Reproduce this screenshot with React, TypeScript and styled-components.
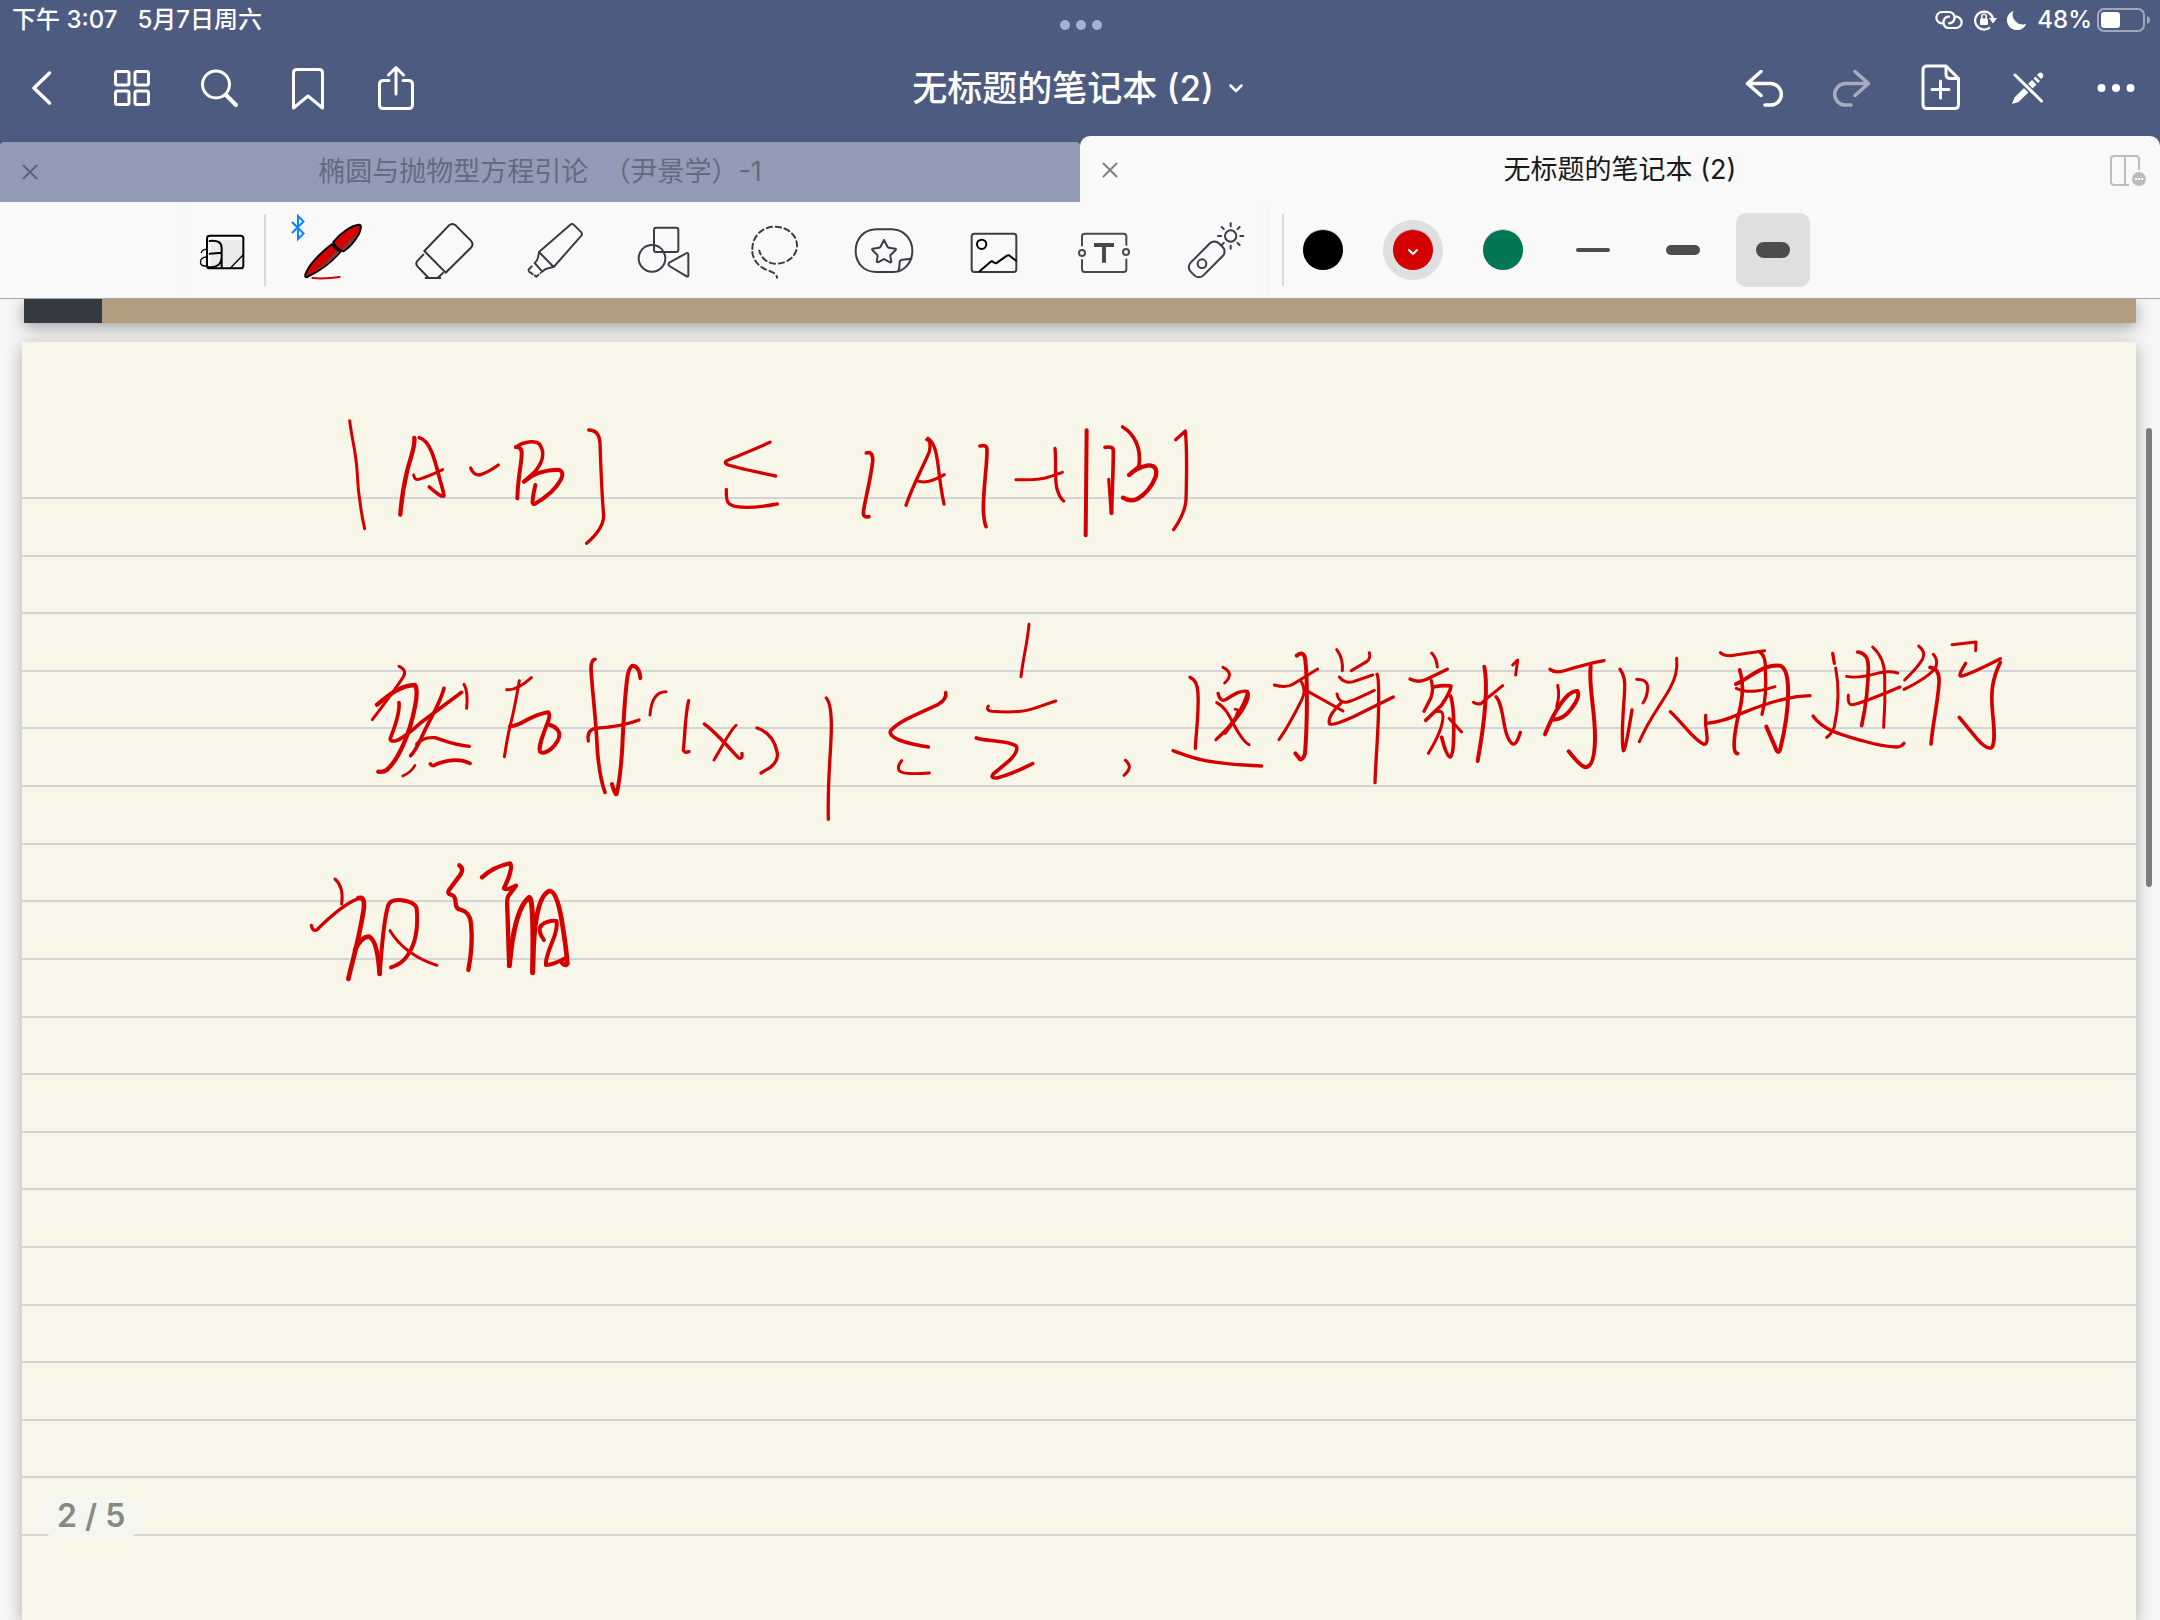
import React from 'react';
import styled, { createGlobalStyle } from 'styled-components';

const GlobalStyle = createGlobalStyle`
  * { box-sizing: border-box; }
  body {
    margin: 0;
    font-family: Inter, "Noto Sans CJK SC", sans-serif;
    background: #f6f6f6;
  }
  button {
    margin: 0;
    padding: 0;
    border: 0;
    background: none;
    color: inherit;
    font: inherit;
    cursor: pointer;
  }
  svg { display: block; }
`;

const Screen = styled.div`
  display: flex;
  flex-direction: column;
  height: 100vh;
  overflow: hidden;
`;

const Header = styled.header`
  flex: none;
  background: #4e5b80;
  color: #fff;
`;

const StatusBar = styled.div`
  display: grid;
  grid-template-columns: 1fr auto 1fr;
  align-items: center;
  height: 40px;
  padding: 0 10px 0 12px;
  font-size: 24px;
  font-weight: 500;
  line-height: 32px;
`;

const StatusTimes = styled.div`
  display: flex;
  gap: 20px;
`;

const StatusIcons = styled.div`
  display: flex;
  align-items: center;
  justify-content: flex-end;
  gap: 10px;
`;

const BatteryGroup = styled.div`
  display: flex;
  align-items: center;
  gap: 4px;
`;

const MultitaskDots = styled.button`
  display: flex;
  gap: 6px;
  padding-top: 10px;
`;

const MultitaskDot = styled.span`
  width: 10px;
  height: 10px;
  border-radius: 50%;
  background: #a3b0da;
`;

const NavBar = styled.nav`
  display: grid;
  grid-template-columns: 1fr auto 1fr;
  align-items: center;
  height: 96px;
`;

const NavGroup = styled.div<{ $end?: boolean }>`
  display: flex;
  justify-content: ${(p) => (p.$end ? 'flex-end' : 'flex-start')};
`;

const NavButton = styled.button`
  display: grid;
  place-items: center;
  width: 88px;
  height: 88px;
  &:disabled { opacity: 0.5; }
`;

const TitleButton = styled.button`
  display: flex;
  align-items: center;
  gap: 10px;
  font-size: 35px;
  font-weight: 500;
  line-height: 48px;
`;

const Tabs = styled.div`
  display: grid;
  grid-template-columns: 1fr 1fr;
  align-items: end;
`;

const Tab = styled.div<{ $active?: boolean }>`
  display: grid;
  grid-template-columns: 60px 1fr 60px;
  align-items: center;
  height: ${(p) => (p.$active ? 66 : 60)}px;
  padding-top: ${(p) => (p.$active ? 2 : 0)}px;
  border-radius: ${(p) => (p.$active ? '10px 10px 0 0' : '4px 4px 0 0')};
  background: ${(p) => (p.$active ? '#f9f9f9' : '#929bb5')};
  color: ${(p) => (p.$active ? '#1a1a1a' : '#636b7e')};
`;

const TabLabel = styled.button`
  font-size: 27px;
  line-height: 40px;
  text-align: center;
  white-space: pre;
`;

const TabIconButton = styled.button`
  display: grid;
  place-items: center;
  height: 48px;
`;

const Toolbar = styled.div`
  flex: none;
  display: flex;
  align-items: center;
  height: 97px;
  padding-left: 176px;
  border-bottom: 1px solid #a6a6a8;
  background: #f9f9f9;
`;

const ToolStrip = styled.div`
  display: flex;
  align-items: center;
  align-self: stretch;
  width: 1093px;
  background:
    linear-gradient(90deg, #f7f7f7, #f9f9f9) left / 18px 100% no-repeat,
    linear-gradient(270deg, #f7f7f7, #f9f9f9) right / 18px 100% no-repeat;
`;

const ToolButton = styled.button<{ $narrow?: boolean }>`
  position: relative;
  display: grid;
  place-items: center;
  width: ${(p) => (p.$narrow ? 88 : 110)}px;
  height: 96px;
`;

const BluetoothBadge = styled.svg`
  position: absolute;
  left: 9px;
  top: 10px;
`;

const Divider = styled.span`
  flex: none;
  width: 2px;
  height: 72px;
  margin: 0 13px 0 0;
  background: #d9d9db;
`;

const StyleDivider = styled(Divider)`
  margin: 0 2px 0 13px;
`;

const PenStyles = styled.div`
  display: flex;
  gap: 16px;
`;

const StyleButton = styled.button<{ $selected?: boolean }>`
  display: grid;
  place-items: center;
  width: 74px;
  height: 74px;
  border-radius: 10px;
  background: ${(p) => (p.$selected ? '#dfdfe2' : 'transparent')};
`;

const SwatchHalo = styled.span<{ $selected?: boolean }>`
  display: grid;
  place-items: center;
  width: 60px;
  height: 60px;
  border-radius: 50%;
  background: ${(p) => (p.$selected ? '#dfdfe2' : 'transparent')};
`;

const Swatch = styled.span<{ $color: string }>`
  display: grid;
  place-items: center;
  width: 40px;
  height: 40px;
  border-radius: 50%;
  background: ${(p) => p.$color};
  box-shadow: 0 -1px 1px rgba(0, 0, 0, 0.2);
`;

const StrokeSample = styled.span<{ $weight: number }>`
  width: 34px;
  height: ${(p) => p.$weight}px;
  border-radius: 8px;
  background: #4c4c4c;
`;

const Canvas = styled.main`
  position: relative;
  flex: 1;
  display: flex;
  flex-direction: column;
  gap: 19px;
  min-height: 0;
  overflow: hidden;
  background: #f6f6f6;
`;

const CoverPage = styled.section`
  flex: none;
  height: 24px;
  margin: 0 24px;
  border-left: 78px solid #353a42;
  background: #b39d81;
  box-shadow: 0 4px 16px rgba(0, 0, 0, 0.36);
`;

const Sheet = styled.section`
  flex: 1;
  min-height: 0;
  margin: 0 24px 0 22px;
  background: #f8f5e8;
  box-shadow: 0 4px 16px rgba(0, 0, 0, 0.3);
  overflow: hidden;
`;

const SheetDrawing = styled.svg`
  width: 100%;
  background: #f8f6e8;
`;

const PageBadge = styled.div`
  position: absolute;
  left: 40px;
  bottom: 80px;
  padding: 0 17px;
  border-radius: 22px;
  background: #f6f6f1;
  color: #858a82;
  font-size: 32px;
  font-weight: 600;
  line-height: 48px;
`;

const ScrollThumb = styled.div`
  position: absolute;
  top: 129px;
  right: 8px;
  width: 6px;
  height: 459px;
  border-radius: 3px;
  background: #7c7c7c;
`;

type IconProps = { children: React.ReactNode };

const NavIcon = ({ children }: IconProps) => (
  <svg width="60" height="60" viewBox="0 0 60 60" fill="none" stroke="#fff" strokeWidth="3" strokeLinecap="round" strokeLinejoin="round" aria-hidden="true">
    {children}
  </svg>
);

const ToolIcon = ({ x, color = '#3a3d48', children }: IconProps & { x: number; color?: string }) => (
  <svg width="80" height="80" viewBox={`${x} 0 240 240`} fill="none" stroke={color} strokeWidth="6" strokeLinecap="round" strokeLinejoin="round" aria-hidden="true">
    {children}
  </svg>
);

const CloseIcon = ({ color }: { color: string }) => (
  <svg width="16" height="16" viewBox="0 0 16 16" stroke={color} strokeWidth="2" strokeLinecap="round" aria-hidden="true">
    <path d="M1.5 1.5 14.5 14.5M14.5 1.5 1.5 14.5" />
  </svg>
);

const sunRays = [0, 45, 90, 135, 180, 225, 270, 315];

const tools: { label: string; bluetooth?: boolean; icon: React.ReactNode }[] = [
  {
    label: '钢笔',
    bluetooth: true,
    icon: (
      <ToolIcon x={342} color="#000">
        <path d="M456 102C420 130 386 165 376 194c-2 9 4 10 9 5C425 180 460 150 482 125 472 121 462 112 456 102Z" fill="#d40000" />
        <path d="M400 187C430 166 452 142 467 124L479 127C456 152 430 174 400 187Z" fill="#7a3c3a" stroke="none" />
        <path d="M460 96C480 70 515 45 538 44c8 2 5 16-3 31-13 22-30 40-45 49-12-3-28-16-30-28Z" fill="#d40000" />
        <path d="M484 116 518 82 529 78C518 97 505 112 490 121Z" fill="#7a3c3a" stroke="none" />
        <path d="M397 204c20 2 55 1 82-3" stroke="#d40000" />
      </ToolIcon>
    ),
  },
  {
    label: '橡皮擦',
    icon: (
      <ToolIcon x={672} color="#333338">
        <path d="M733 123 807 46q10-8 20 0l45 45q10 11 2 21l-77 76Z" />
        <path d="M730 134 711 154q-5 8 2 16l30 31M789 189 775 202" />
        <path d="M737 204h44" />
      </ToolIcon>
    ),
  },
  {
    label: '荧光笔',
    icon: (
      <ToolIcon x={1002}>
        <path d="M1077 126 1171 44q5-4 10 0l23 23q4 5 0 10l-83 94Z" />
        <path d="M1077 128 1074 143q-2 10-10 16l23 26q8-9 18-10l14-4" />
        <path d="M1055 169 1043 182 1069 200 1082 189" strokeDasharray="14 8" />
      </ToolIcon>
    ),
  },
  {
    label: '形状',
    icon: (
      <ToolIcon x={1332}>
        <rect x="1422" y="53" width="73" height="73" rx="6" />
        <circle cx="1416" cy="145" r="40" />
        <path d="m1468 158 52-29q5-1 5 4v63q0 5-5 3l-52-31q-5-5 0-10Z" />
      </ToolIcon>
    ),
  },
  {
    label: '套索',
    icon: (
      <ToolIcon x={102}>
        <path d="M157 117C157 78 188 50 224 50c38 0 67 25 67 57 0 31-29 54-63 54-26 0-44-16-50-39" strokeDasharray="16 11" />
        <path d="M157 126c2 24 20 45 43 54 20 6 30 12 31 23" strokeDasharray="16 11" />
      </ToolIcon>
    ),
  },
  {
    label: '贴纸',
    icon: (
      <ToolIcon x={432}>
        <path d="M530 58h45c37 0 62 30 62 64 0 38-27 64-57 64h-50c-40 0-63-28-63-64 0-34 23-64 63-64Z" />
        <path d="M595 184q4-10 4-27 0-7 8-8l27-3" />
        <path d="m552 90 11 21q2 2 4 2l19 3q3 2 1 4l-15 15q-2 2-1 4l3 16q-1 3-4 2l-16-9q-2-1-4 0l-16 9q-4 0-4-3l3-15q0-2-1-4l-15-15q-2-3 1-4l19-3q3 0 4-2Z" />
      </ToolIcon>
    ),
  },
  {
    label: '图片',
    icon: (
      <ToolIcon x={762}>
        <rect x="815" y="71" width="134" height="115" rx="8" />
        <circle cx="845" cy="103" r="14" stroke="#000" />
        <path d="m839 184 32-28q5-4 10 1l7 3 33-23q5-3 9 1l18 14" stroke="#000" />
      </ToolIcon>
    ),
  },
  {
    label: '文本',
    icon: (
      <ToolIcon x={1092} color="#4a4a4a">
        <path d="M1146 109V79q0-8 8-8h117q8 0 8 8v28M1146 148v30q0 8 8 8h117q8 0 8-8v-32" strokeLinecap="butt" />
        <circle cx="1146" cy="129" r="9" />
        <circle cx="1278" cy="126" r="9" />
        <path d="M1182 105h60M1212 105v53" strokeWidth="12" strokeLinecap="butt" />
      </ToolIcon>
    ),
  },
  {
    label: '激光笔',
    icon: (
      <ToolIcon x={1422}>
        <rect x="1493" y="88" width="54" height="120" rx="19" transform="rotate(45 1520 148)" />
        <circle cx="1506" cy="161" r="13" />
        <circle cx="1592" cy="78" r="17" />
        {sunRays.map((a) => (
          <path key={a} d="M1592 49v-9" transform={`rotate(${a} 1592 78)`} />
        ))}
      </ToolIcon>
    ),
  },
];

const swatches = [
  { label: '黑色', color: '#000' },
  { label: '红色', color: '#d40000', selected: true },
  { label: '绿色', color: '#007655' },
];

const weights = [
  { label: '细', weight: 4 },
  { label: '中', weight: 10 },
  { label: '粗', weight: 16, selected: true },
];

type Stroke = [string, number];
type InkBlock = { x: number; y: number; strokes: Stroke[] };

/* Pen strokes, three units to the pixel, each with its nib width. */
const ink: InkBlock[] = [
  {
    x: 320,
    y: 390,
    strokes: [
      ['M89 92C96 150 107 180 111 240 113 290 117 340 134 416', 8],
      ['M283 144C286 170 275 190 262 240 250 290 244 330 241 374', 12],
      ['M298 143C330 150 345 210 360 270 366 290 370 305 372 317Q366 325 328 291', 10],
      ['M281 255Q284 272 296 268 320 262 368 239', 8],
      ['M452 234Q460 255 478 255 500 250 535 225', 9],
      ['M588 171Q602 170 605 185C607 215 594 250 592 325', 11],
      ['M588 171C610 155 645 150 658 162 675 185 670 215 645 245L612 275', 10],
      ['M612 275Q650 240 715 239 735 245 722 270 700 310 645 341 636 345 638 330 640 310 646 285', 11],
      ['M806 120Q838 120 840 160C843 240 845 310 851 375Q852 415 800 460', 9],
      ['M1350 157C1300 180 1260 195 1225 210Q1207 217 1225 225C1260 236 1310 246 1367 258', 9],
      ['M1219 298C1218 335 1222 345 1250 350Q1290 357 1372 342', 9],
      ['M237 829Q262 840 250 860 235 885 157 989', 8],
      ['M171 944C200 920 240 885 285 885Q295 900 285 950C270 1030 235 1110 200 1140Q190 1148 175 1145', 12],
      ['M237 938C240 970 225 1010 211 1045Q210 1056 228 1052 250 1045 300 1000L425 907', 10],
      ['M372 895C360 940 340 970 320 1010 300 1050 290 1080 272 1097', 10],
      ['M432 883Q445 905 440 955', 8],
      ['M290 1062Q310 1040 345 1043C375 1052 400 1065 448 1069', 9],
      ['M331 1122Q338 1132 350 1122 410 1100 450 1120', 10],
      ['M285 1126Q272 1148 248 1158', 7],
      ['M560 899Q590 903 634 863', 8],
      ['M598 872C590 920 575 990 570 1010 560 1050 557 1080 553 1100', 8],
      ['M570 1009Q590 1008 620 990 660 970 685 967 693 975 680 1005C665 1045 655 1070 660 1085Q670 1095 695 1075 725 1045 716 1025 708 1010 690 1005', 11],
      ['M825 808Q814 808 813 835C816 900 828 980 832 1080 836 1130 845 1180 855 1207', 10],
      ['M961 864Q958 828 937 827 925 835 921 870C915 920 910 1000 907 1070 903 1140 897 1180 890 1212Q886 1218 876 1182', 11],
      ['M805 1053Q800 1020 825 1015C870 1012 920 1005 957 990', 9],
      ['M990 975Q995 905 1038 905', 8],
      ['M1106 932C1095 975 1095 1040 1090 1080Q1092 1090 1107 1085', 9],
      ['M1153 1002C1180 1020 1220 1065 1255 1103Q1268 1110 1266 1090', 9],
      ['M1248 1006Q1240 1012 1220 1045L1182 1110', 8],
      ['M1311 1014Q1360 1030 1371 1085 1378 1110 1350 1133L1323 1149', 9],
    ],
  },
  {
    x: 700,
    y: 390,
    strokes: [
      ['M499 189Q520 183 518 215C510 280 492 340 490 370Q490 383 507 380', 10],
      ['M680 149Q695 150 688 185C670 230 640 280 618 346', 9],
      ['M684 145C705 160 710 190 716 240 722 290 725 310 732 342', 9],
      ['M650 272Q680 285 733 254', 8],
      ['M840 168Q862 163 861 180C862 220 850 290 850 360Q852 395 858 410', 10],
      ['M948 269Q1020 272 1050 260L1087 247', 8],
      ['M1065 175C1070 230 1062 270 1072 300Q1080 325 1091 333', 9],
      ['M1160 121 1157 436', 11],
      ['M1215 172Q1240 168 1240 182C1240 250 1236 300 1235 370', 10],
      ['M1226 268Q1230 320 1233 370', 8],
      ['M1268 111C1300 130 1325 170 1317 228L1288 255', 10],
      ['M1287 255Q1310 232 1345 226 1375 225 1367 260 1350 305 1310 328 1290 336 1269 323', 12],
      ['M1427 149 1456 123C1462 180 1460 260 1458 330Q1455 370 1421 419', 9],
      ['M379 924Q393 940 394 1000C395 1080 382 1150 385 1288', 9],
      ['M737 908Q742 925 715 943C670 965 600 990 572 1022Q565 1035 595 1049 630 1062 685 1071', 10],
      ['M605 1112Q590 1130 598 1142 610 1155 688 1149', 8],
      ['M987 703C982 760 970 800 963 860', 8],
      ['M865 948Q857 962 875 964 960 970 1000 956L1067 933', 8],
      ['M829 1044C860 1055 925 1050 948 1068Q958 1080 930 1110L880 1152Q870 1165 890 1164 930 1155 998 1121', 10],
      ['M1276 1111Q1302 1130 1272 1156', 8],
    ],
  },
  {
    x: 1140,
    y: 610,
    strokes: [
      ['M150 202Q172 210 174 250C177 310 168 370 166 415', 9],
      ['M249 172Q285 190 254 219', 8],
      ['M234 250Q240 275 255 270C280 255 300 240 322 244Q332 260 310 295 290 330 228 389', 9],
      ['M323 250Q310 300 255 368', 11],
      ['M230 278C265 295 275 340 300 375Q315 398 327 404', 8],
      ['M285 298Q300 296 290 312', 7],
      ['M99 422C150 440 180 460 365 468', 9],
      ['M470 137Q493 120 496 150C503 210 502 340 495 430Q490 450 480 448L466 430', 11],
      ['M403 225Q440 235 460 222L533 177', 8],
      ['M484 215Q500 240 485 270C465 310 445 350 417 389', 8],
      ['M505 245 609 303', 8],
      ['M590 119Q610 145 607 182', 8],
      ['M688 128Q693 145 680 155L634 182', 8],
      ['M598 201Q615 222 640 215L698 195', 8],
      ['M591 252Q595 275 615 277 630 277 703 241', 8],
      ['M605 277Q560 320 569 342 580 347 640 320L760 261', 9],
      ['M711 193Q716 200 716 260C717 350 708 430 705 518', 9],
      ['M875 129Q890 145 892 171', 8],
      ['M810 207Q835 220 860 208L922 178', 9],
      ['M874 212Q882 240 872 265L852 304', 9],
      ['M880 231Q910 225 933 228 932 245 905 285L857 331', 10],
      ['M932 258C942 290 942 340 941 380Q940 440 930 441 920 440 905 382', 10],
      ['M890 305Q910 300 909 320C908 350 890 390 865 430', 8],
      ['M927 325 965 366', 8],
      ['M1033 170C1045 230 1035 330 1013 453', 11],
      ['M1000 277Q1020 290 1035 270L1088 227', 8],
      ['M1068 260C1095 290 1085 370 1115 400Q1128 412 1141 367', 9],
      ['M1118 165 1133 150 1127 195', 8],
    ],
  },
  {
    x: 1550,
    y: 610,
    strokes: [
      ['M0 178Q15 190 40 183C90 168 130 158 162 152', 9],
      ['M122 170C115 230 137 310 135 390Q133 470 107 472 92 470 56 424', 11],
      ['M23 226Q30 255 20 290', 8],
      ['M-15 373C10 310 50 240 82 243Q92 260 65 295 40 330 5 330', 11],
      ['M210 178Q227 200 224 240C220 310 212 380 220 422Q226 425 246 300', 9],
      ['M260 208Q295 208 293 235 292 260 279 279', 8],
      ['M380 145Q385 190 360 235C330 290 300 320 268 395', 8],
      ['M361 305C400 340 430 390 462 403Q475 403 470 370 465 340 467 316', 9],
      ['M511 128Q525 142 560 134L644 122', 8],
      ['M569 180C585 230 575 280 562 330 550 390 548 430 563 431', 10],
      ['M558 222C590 210 640 160 690 167Q712 175 714 230C717 300 700 380 690 420Q683 435 675 410L649 350', 11],
      ['M628 125Q648 135 646 180C650 240 645 280 636 313', 9],
      ['M559 235Q600 255 675 230', 8],
      ['M470 340C540 335 600 290 700 268Q740 257 780 257', 9],
      ['M848 130 853 160', 9],
      ['M857 174C868 230 866 290 853 350Q845 372 830 382', 8],
      ['M923 126Q955 130 955 170C955 240 945 300 935 347', 10],
      ['M968 111Q1005 145 1004 200C1006 260 1005 300 1001 352', 8],
      ['M890 199Q920 207 990 188 1020 182 1043 189', 8],
      ['M895 256Q892 285 907 284 930 282 1050 231', 8],
      ['M789 318C820 360 860 370 940 393Q1000 410 1040 411 1055 410 1062 400', 9],
      ['M1106 108Q1128 125 1118 147 1105 170 1064 210', 8],
      ['M1150 133Q1165 150 1158 170 1140 200 1062 238', 8],
      ['M1140 172Q1170 175 1167 220C1163 280 1150 330 1143 402', 10],
      ['M1206 104 1278 96 1277 122', 8],
      ['M1247 160Q1225 195 1231 198 1245 200 1351 146', 9],
      ['M1351 157C1325 210 1322 250 1328 310 1333 360 1336 400 1325 413Q1310 420 1280 385L1228 322', 10],
    ],
  },
  {
    x: 290,
    y: 840,
    strokes: [
      ['M135 117Q162 140 155 192', 8],
      ['M64 256Q68 275 80 270C110 240 170 185 215 172', 9],
      ['M205 174Q228 168 220 215C205 310 185 370 175 417', 13],
      ['M195 330Q215 288 237 290 262 300 269 402', 13],
      ['M269 402C275 330 280 240 295 195Q302 178 330 180 375 185 380 205C385 260 380 310 350 350Q335 372 303 382', 11],
      ['M300 272Q345 345 441 376', 8],
      ['M508 76Q522 85 512 103L477 150Q470 162 485 165 497 168 497 190 498 208 515 210 540 218 543 250C548 300 543 350 535 390', 12],
      ['M576 112Q610 80 660 70 668 78 655 115L642 145Q650 152 678 137L655 168Q650 175 652 210C655 280 655 330 658 377', 12],
      ['M658 377C665 300 680 200 718 172Q732 175 728 398', 14],
      ['M728 398C730 300 735 170 778 153Q800 150 815 240C825 300 830 340 832 370Q828 380 817 370', 13],
      ['M762 300Q740 270 755 255 775 240 800 243 803 270 785 310 765 360 768 375 790 375 832 352', 11],
    ],
  },
];

const rules = Array.from({ length: 19 }, (_, i) => Math.round(498 + (i * 1037) / 18));

export default function App() {
  return (
    <Screen>
      <GlobalStyle />
      <Header>
        <StatusBar>
          <StatusTimes>
            <span>下午 3:07</span>
            <span>5月7日周六</span>
          </StatusTimes>
          <MultitaskDots aria-label="多任务">
            <MultitaskDot />
            <MultitaskDot />
            <MultitaskDot />
          </MultitaskDots>
          <StatusIcons>
            <svg width="28" height="20" viewBox="0 0 28 20" fill="none" stroke="#fff" strokeWidth="2.2" strokeLinecap="round" aria-hidden="true">
              <path d="M7 13.300A5.600 5.600 0 0 1 7 2h7a5.600 5.600 0 0 1 5 8.200q-1.500 3.100-5 3.100" />
              <path d="M21 6.700a5.600 5.600 0 0 1 0 11.300h-7a5.600 5.600 0 0 1-5-8.200q1.500-3.100 5-3.100" />
            </svg>
            <svg width="24" height="22" viewBox="0 0 24 22" fill="none" stroke="#fff" strokeWidth="2.2" aria-hidden="true">
              <path d="M17 18.400A9 9 0 1 1 20 10" />
              <path d="M16 9h8l-4 5.500Z" fill="#fff" stroke="none" />
              <rect x="7" y="9.500" width="8" height="6.500" rx="1" fill="#fff" stroke="none" />
              <path d="M8.800 10V7.500a2.200 2.200 0 0 1 4.400 0V10" strokeWidth="1.500" />
            </svg>
            <svg width="20" height="20" viewBox="0 0 20 20" fill="#fff" aria-hidden="true">
              <path d="M6.500 0.800A10 10 0 1 0 19.300 13.700 9.800 9.800 0 0 1 6.500 0.800Z" />
            </svg>
            <BatteryGroup>
              <span>48%</span>
              <svg width="54" height="26" viewBox="0 0 54 26" aria-hidden="true">
                <rect x="2" y="2" width="46" height="22" rx="6" fill="none" stroke="#a1a8bc" strokeWidth="2" />
                <rect x="5" y="5" width="19" height="16" rx="3" fill="#fff" />
                <path d="M51 9q3 1 3 4t-3 4Z" fill="#a1a8bc" />
              </svg>
            </BatteryGroup>
          </StatusIcons>
        </StatusBar>
        <NavBar aria-label="导航">
          <NavGroup>
            <NavButton aria-label="返回">
              <NavIcon><path d="M35.500 15 20 30 35.500 45" strokeWidth="3.500" /></NavIcon>
            </NavButton>
            <NavButton aria-label="缩略图">
              <NavIcon>
                <rect x="13.500" y="13.500" width="13.500" height="13.500" rx="2" />
                <rect x="33" y="13.500" width="13.500" height="13.500" rx="2" />
                <rect x="13.500" y="33" width="13.500" height="13.500" rx="2" />
                <rect x="33" y="33" width="13.500" height="13.500" rx="2" />
              </NavIcon>
            </NavButton>
            <NavButton aria-label="搜索">
              <NavIcon>
                <circle cx="26" cy="26.500" r="13.500" />
                <path d="M36 37 46 47" strokeWidth="4" />
              </NavIcon>
            </NavButton>
            <NavButton aria-label="书签">
              <NavIcon><path d="M15.500 50V15q0-3.500 3.500-3.500h22q3.500 0 3.500 3.500v35L30 38Z" /></NavIcon>
            </NavButton>
            <NavButton aria-label="分享">
              <NavIcon>
                <path d="M23 22.500h-5.500q-4 0-4 4v20q0 4 4 4h25q4 0 4-4v-20q0-4-4-4H37M30 10v26M22.500 17 30 9.500l7.500 7.500" />
              </NavIcon>
            </NavButton>
          </NavGroup>
          <TitleButton>
            <span>无标题的笔记本 (2)</span>
            <svg width="24" height="24" viewBox="0 0 24 24" fill="none" stroke="#fff" strokeWidth="2.500" strokeLinecap="round" strokeLinejoin="round" aria-hidden="true">
              <path d="M6.500 9.500 12 15l5.500-5.500" />
            </svg>
          </TitleButton>
          <NavGroup $end>
            <NavButton aria-label="撤销">
              <NavIcon><path d="M27 13.500 13.500 25.500 27 37.500M14 25.500h22.500a10.800 10.800 0 0 1 0 21.600H31" strokeWidth="3.500" /></NavIcon>
            </NavButton>
            <NavButton aria-label="重做" disabled>
              <NavIcon><path d="M33 13.500 46.500 25.500 33 37.500M46 25.500H23.500a10.800 10.800 0 0 0 0 21.600H29" strokeWidth="3.500" /></NavIcon>
            </NavButton>
            <NavButton aria-label="添加页面">
              <NavIcon>
                <path d="M17 8h19l12.500 12.500V46.500q0 4-4 4H17q-4 0-4-4V12q0-4 4-4Z" />
                <path d="M36 8.500v7.500q0 4.500 4.500 4.500h7.500M30.500 23v17M22 31.500h17" />
              </NavIcon>
            </NavButton>
            <NavButton aria-label="只读模式">
              <NavIcon>
                <path d="m14 46 2.500-6.500L34 22l4.500 4.500L20.500 44Z" fill="#fff" stroke="none" />
                <path d="m35.500 20.500 2-2 4.500 4.500-2 2ZM39 17l2-2q2-1 3.500 0.500t.5 3.500l-2 2Z" fill="#fff" stroke="none" />
                <path d="M16 16 43 43" stroke="#4e5b80" strokeWidth="6" strokeLinecap="butt" />
                <path d="M17 17 43.500 43" />
              </NavIcon>
            </NavButton>
            <NavButton aria-label="更多">
              <NavIcon>
                <g fill="#fff" stroke="none">
                  <circle cx="15.500" cy="30" r="4" />
                  <circle cx="30" cy="30" r="4" />
                  <circle cx="44.500" cy="30" r="4" />
                </g>
              </NavIcon>
            </NavButton>
          </NavGroup>
        </NavBar>
        <Tabs>
          <Tab>
            <TabIconButton aria-label="关闭标签页"><CloseIcon color="#5a6378" /></TabIconButton>
            <TabLabel>{'椭圆与抛物型方程引论  （尹景学）-1'}</TabLabel>
          </Tab>
          <Tab $active>
            <TabIconButton aria-label="关闭标签页"><CloseIcon color="#808083" /></TabIconButton>
            <TabLabel aria-current="page">无标题的笔记本 (2)</TabLabel>
            <TabIconButton aria-label="分屏">
              <svg width="40" height="36" viewBox="3 0 40 36" fill="none" stroke="#bebec0" strokeWidth="2" aria-hidden="true">
                <path d="M32 18V7q0-3-3-3H7Q4 4 4 7v23q0 3 3 3h15M18 4v29" />
                <circle cx="32" cy="27" r="7" fill="#bcbcbe" stroke="none" />
                <path d="M28 27h8" stroke="#fff" strokeDasharray="2 1" />
              </svg>
            </TabIconButton>
          </Tab>
        </Tabs>
      </Header>
      <Toolbar role="toolbar" aria-label="绘图工具">
        <ToolStrip>
          <ToolButton $narrow aria-label="放大窗口">
            <ToolIcon x={-3} color="#000">
              <rect x="90" y="90" width="92" height="84" rx="10" fill="#ececec" stroke="none" />
              <rect x="78" y="77" width="109" height="98" rx="8" />
              <path d="M86 93c26-3 36 5 36 22v58M86 131l36-3M80 171c28 4 42-8 42-34" />
              <path d="M61 128q3-10 13-10M76 141c-22 1-22 26-7 27h10M149 173l37-38" strokeWidth="4" />
            </ToolIcon>
          </ToolButton>
          <Divider />
          {tools.map((t) => (
            <ToolButton key={t.label} aria-label={t.label} aria-pressed={!!t.bluetooth}>
              {t.icon}
              {t.bluetooth && (
                <BluetoothBadge width="20" height="32" viewBox="0 0 20 32" fill="none" stroke="#0a84ff" strokeWidth="2" aria-hidden="true">
                  <path d="M4 10 15.500 21.500 10 27V4l5.500 5.500L4 21" />
                </BluetoothBadge>
              )}
            </ToolButton>
          ))}
        </ToolStrip>
        <StyleDivider />
        <PenStyles>
          {swatches.map((s) => (
            <StyleButton key={s.label} aria-label={s.label} aria-pressed={!!s.selected}>
              <SwatchHalo $selected={s.selected}>
                <Swatch $color={s.color}>
                  {s.selected && (
                    <svg width="16" height="16" viewBox="0 0 16 16" fill="none" stroke="#fff" strokeWidth="2" strokeLinecap="round" strokeLinejoin="round" aria-hidden="true">
                      <path d="m4 8 4 4 4-4" />
                    </svg>
                  )}
                </Swatch>
              </SwatchHalo>
            </StyleButton>
          ))}
          {weights.map((w) => (
            <StyleButton key={w.label} aria-label={w.label} aria-pressed={!!w.selected} $selected={w.selected}>
              <StrokeSample $weight={w.weight} />
            </StyleButton>
          ))}
        </PenStyles>
      </Toolbar>
      <Canvas>
        <CoverPage aria-label="第 1 页" />
        <Sheet aria-label="第 2 页">
          <SheetDrawing viewBox="22 342 2114 1278" preserveAspectRatio="xMidYMin meet" role="img" aria-label="手写笔记">
            {rules.map((y) => (
              <rect key={y} x="22" y={y - 1} width="2114" height="2" fill="#d2d4d6" />
            ))}
            {ink.map((b) => (
              <g key={`${b.x}-${b.y}`} transform={`translate(${b.x} ${b.y}) scale(${1 / 3})`} fill="none" stroke="#d40000" strokeLinecap="round" strokeLinejoin="round">
                {b.strokes.map(([d, w]) => (
                  <path key={d} d={d} strokeWidth={w + 1} />
                ))}
              </g>
            ))}
          </SheetDrawing>
        </Sheet>
        <PageBadge>2 / 5</PageBadge>
        <ScrollThumb />
      </Canvas>
    </Screen>
  );
}
